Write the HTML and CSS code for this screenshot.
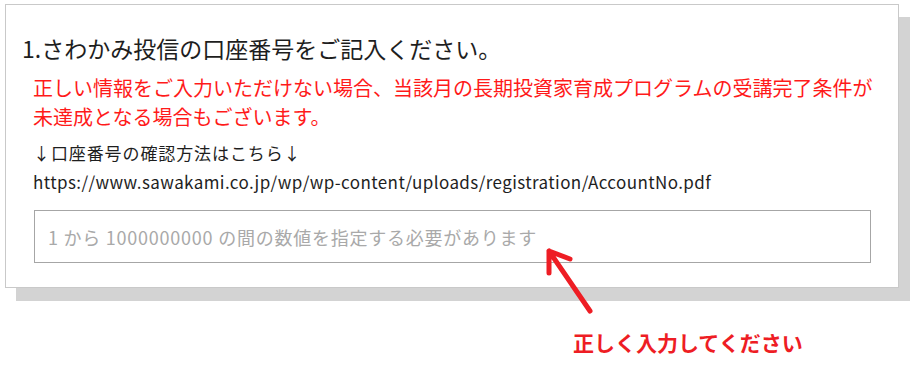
FILE: index.html
```html
<!DOCTYPE html>
<html lang="ja">
<head>
<meta charset="utf-8">
<link rel="stylesheet" href="styles.css">
</head>
<body>
<div class="page">
  <section class="card">
    <h2 class="title">1.さわかみ投信の口座番号をご記入ください。</h2>
    <p class="warn">正しい情報をご入力いただけない場合、当該月の長期投資家育成プログラムの受講完了条件が<br>未達成となる場合もございます。</p>
    <div class="info">
      <p class="info-line lead">↓口座番号の確認方法はこちら↓</p>
      <p class="info-line url">https://www.sawakami.co.jp/wp/wp-content/uploads/registration/AccountNo.pdf</p>
    </div>
    <div class="field"><span class="placeholder">1 から 1000000000 の間の数値を指定する必要があります</span></div>
  </section>
  <p class="note">正しく入力してください</p>
  <svg class="arrow" width="60" height="80" viewBox="0 0 60 80">
    <path d="M51 71 L10 11 M10 11 L10 33 M10 11 L31 19" fill="none" stroke="#ee1d24" stroke-width="5" stroke-linecap="round" stroke-linejoin="round"/>
  </svg>
</div>
</body>
</html>
```
FILE: styles.css
```css
* { box-sizing: border-box; }
html, body { margin: 0; padding: 0; background: #fff; }
body { font-family: "Noto Sans CJK JP", "Noto Sans", sans-serif; color: #222; }
.page { position: relative; width: 914px; height: 385px; padding: 4px 0 0 5px; }
.card {
  width: 894px;
  border: 1px solid #c9c9c9;
  background: #fff;
  box-shadow: 11px 13px 0 #d3d3d3;
  padding: 28px 0 24px 0;
}
.title { margin: 0; padding-left: 16px; font-size: 23px; font-weight: 400; line-height: 30px; color: #1e1e1e; }
.warn { margin: 10px 0 0; padding-left: 27px; font-size: 20px; line-height: 29px; color: #ff1a1a; }
.info { margin: 7px 0 0; padding-left: 27px; color: #1e1e1e; }
.info-line { margin: 0; font-size: 17px; line-height: 29px; }
.lead { letter-spacing: 0.9px; }
.url { letter-spacing: 0.4px; }
.field {
  margin: 14px 0 0 28px;
  width: 837px;
  height: 53px;
  border: 1px solid #a6a6a6;
  display: flex;
  align-items: center;
  padding-left: 13px;
}
.placeholder { font-size: 18px; letter-spacing: 0.76px; color: #a9a9a9; }
.note { margin: 40px 0 0 568px; font-size: 21px; font-weight: 700; line-height: 28px; color: #ee1d24; }
.arrow { position: absolute; left: 539px; top: 240px; }
```
